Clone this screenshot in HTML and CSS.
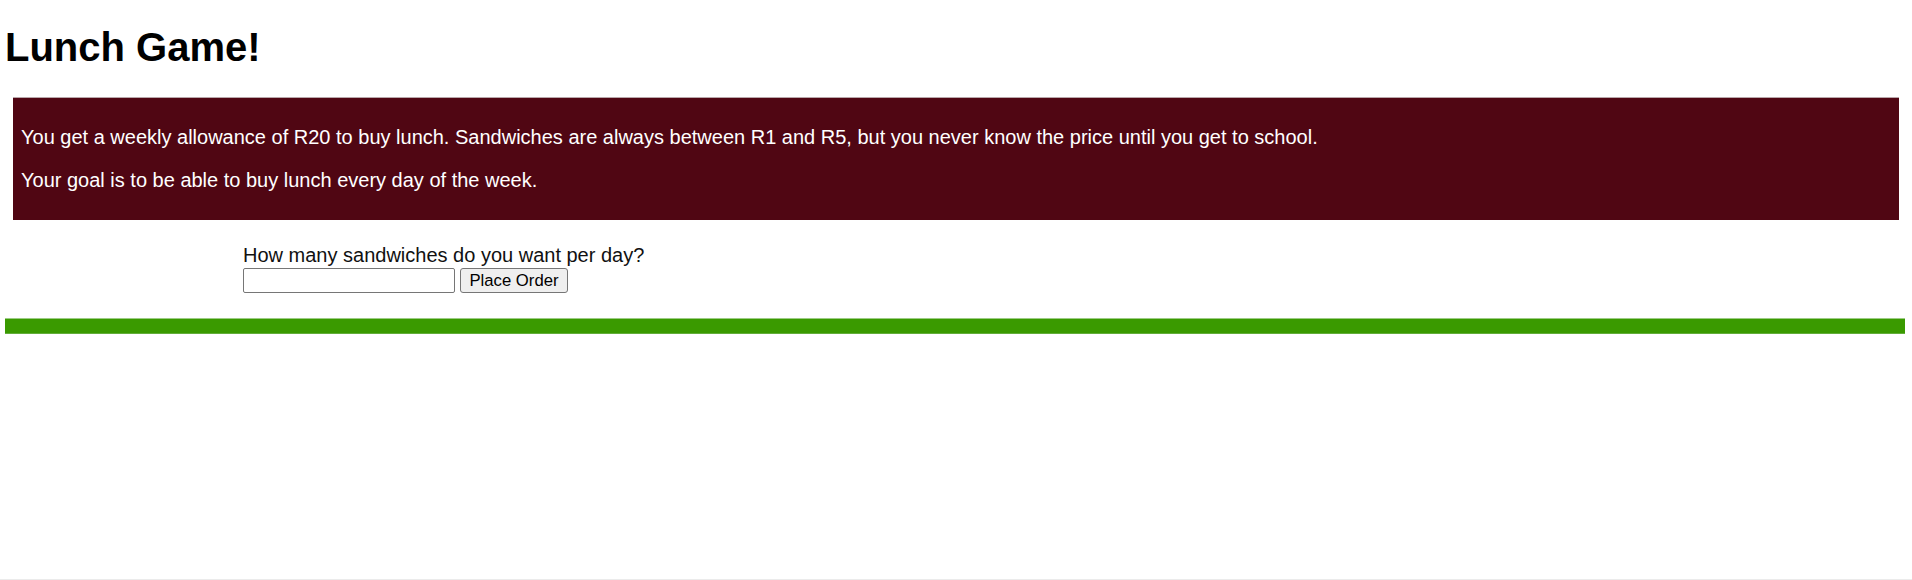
FILE: index.html
```html
<!DOCTYPE html>
<html lang="en">
<head>
<meta charset="utf-8">
<title>Lunch Game!</title>
<link rel="stylesheet" href="styles.css">
</head>
<body>
<div class="page">
  <h1 class="title">Lunch Game!</h1>
  <div class="intro">
    <p>You get a weekly allowance of R20 to buy lunch. Sandwiches are always between R1 and R5, but you never know the price until you get to school.</p>
    <p>Your goal is to be able to buy lunch every day of the week.</p>
  </div>
  <form class="order">
    <label class="order-label" for="qty">How many sandwiches do you want per day?</label>
    <div class="order-row">
      <input class="order-input" id="qty" type="text">
      <button class="order-btn" type="button">Place Order</button>
    </div>
  </form>
  <div class="bar"></div>
</div>
</body>
</html>
```
FILE: styles.css
```css
html {
  min-height: 100vh;
  box-sizing: border-box;
  border-bottom: 1px solid #ebebeb;
}
body {
  margin: 0;
  font-family: "Liberation Sans", Arial, sans-serif;
  font-size: 20px;
  color: #111;
  background: #fff;
}
.page {
  padding: 0 5px;
}
.title {
  margin: 24px 0 27px;
  font-size: 40px;
  font-weight: bold;
  line-height: 46px;
  color: #000;
}
.intro {
  margin: 0 8px;
  padding: 8px;
  background: #500613;
  color: #fff;
  border-top: 1px solid #b9a7aa;
}
.intro p {
  margin: 20px 0;
  line-height: 23px;
}
.order {
  margin: 24px 0 0;
  padding-left: 238px;
  display: flex;
  flex-direction: column;
  gap: 1px;
}
.order-label {
  display: block;
  line-height: 23px;
}
.order-row {
  display: flex;
  gap: 5px;
}
.order-input {
  box-sizing: border-box;
  width: 212px;
  height: 25px;
  margin: 0;
  border: 1px solid #767676;
  border-radius: 2px;
  padding: 1px 3px;
  font: 16.7px "Liberation Sans", Arial, sans-serif;
}
.order-btn {
  box-sizing: border-box;
  width: 108px;
  height: 25px;
  margin: 0;
  padding: 0 6px;
  background: #efefef;
  border: 1px solid #767676;
  border-radius: 3px;
  font: 16.7px "Liberation Sans", Arial, sans-serif;
  color: #000;
}
.bar {
  margin-top: 25px;
  width: 1900px;
  height: 16px;
  box-sizing: border-box;
  background: #3a9a00;
  border-top: 1px solid #9ccc84;
  border-bottom: 1px solid #62ad3a;
}
```
